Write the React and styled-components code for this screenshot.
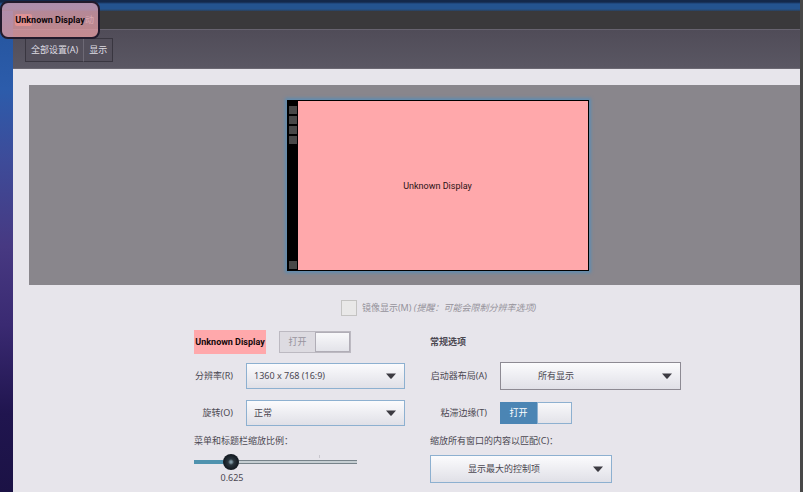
import React, { useState } from "react";
import styled, { createGlobalStyle } from "styled-components";

function App() {
  const [scale, setScale] = useState(0.625);
  const [sticky, setSticky] = useState(true);

  return (
    <Desktop>
      <GlobalStyle />
      <Window>
        <TitleBar>
          <CloseDot />
          <span>动</span>
        </TitleBar>
        <Toolbar>
          <Crumb type="button">全部设置(A)</Crumb>
          <Crumb type="button">显示</Crumb>
        </Toolbar>
        <Content>
          <Stage>
            <Monitor>
              <Launcher>
                <i />
                <i />
                <i />
                <i />
                <i className="trash" />
              </Launcher>
              <Screen>Unknown Display</Screen>
            </Monitor>
          </Stage>

          <Mirror>
            <input type="checkbox" disabled />
            <span>
              镜像显示(M) <em>(提醒：可能会限制分辨率选项)</em>
            </span>
          </Mirror>

          <Form>
            <Column>
              <Header>
                <DisplayName>Unknown Display</DisplayName>
                <Toggle $disabled>
                  <span>打开</span>
                  <input type="checkbox" defaultChecked disabled />
                </Toggle>
              </Header>
              <Row $label={39}>
                <label htmlFor="resolution">分辨率(R)</label>
                <Dropdown id="resolution" options={["1360 x 768 (16:9)"]} />
              </Row>
              <Row $label={39}>
                <label htmlFor="rotation">旋转(O)</label>
                <Dropdown id="rotation" options={["正常"]} />
              </Row>
              <Caption htmlFor="scale">菜单和标题栏缩放比例：</Caption>
              <Scale>
                <Slider
                  id="scale"
                  type="range"
                  min="0.5"
                  max="1.125"
                  step="0.125"
                  value={scale}
                  style={{ "--fill": `${((scale - 0.5) / 0.625) * 100}%` }}
                  onChange={(e) => setScale(Number(e.target.value))}
                />
                <output htmlFor="scale">{scale}</output>
              </Scale>
            </Column>

            <Column $wide>
              <Header>
                <h2>常规选项</h2>
              </Header>
              <Row $label={57}>
                <label htmlFor="launcher">启动器布局(A)</label>
                <Dropdown id="launcher" options={["所有显示"]} tall plain />
              </Row>
              <Row $label={57}>
                <label htmlFor="sticky">粘滞边缘(T)</label>
                <Toggle>
                  <span>打开</span>
                  <input
                    id="sticky"
                    type="checkbox"
                    checked={sticky}
                    onChange={() => setSticky((prev) => !prev)}
                  />
                </Toggle>
              </Row>
              <Caption htmlFor="match">缩放所有窗口的内容以匹配(C)：</Caption>
              <MatchField>
                <Dropdown id="match" options={["显示最大的控制项"]} tall />
              </MatchField>
            </Column>
          </Form>
        </Content>
      </Window>
      <Badge>Unknown Display</Badge>
    </Desktop>
  );
}

function Dropdown({ id, options, tall, plain }) {
  return (
    <SelectBox $tall={tall} $plain={plain}>
      <select id={id}>
        {options.map((item) => (
          <option key={item}>{item}</option>
        ))}
      </select>
      <svg width="10" height="6" viewBox="0 0 10 6">
        <path d="M0 0.5H10L5.6 5.4Q5 6 4.4 5.4Z" fill="#3c3b42" />
      </svg>
    </SelectBox>
  );
}

export default App;

const GlobalStyle = createGlobalStyle`
  * {
    box-sizing: border-box;
  }
  body {
    margin: 0;
    color: #4b4852;
    font: 9px/10px "Noto Sans", "Noto Sans CJK SC", sans-serif;
  }
  button, input, select {
    margin: 0;
    color: inherit;
    font: inherit;
  }
`;

const Desktop = styled.div`
  position: relative;
  display: flex;
  min-height: 100vh;
  padding: 11px 3px 0 13px;
  background:
    linear-gradient(#484848, #484848) right / 3px 100% no-repeat,
    linear-gradient(#14284a 2px, #24538f 4px, #24538f 9px, #2b4058) top / 100%
      11px no-repeat,
    linear-gradient(#23539a, #2c5cab 18%, #3d4c9a 32%, #473982 50%, #3a2a72 66%, #20154f 84%, #1b1245);
`;

const Window = styled.div`
  flex: 1;
  display: flex;
  flex-direction: column;
  min-width: 0;
  background: #e7e5eb;
`;

const TitleBar = styled.div`
  display: flex;
  align-items: center;
  gap: 53px;
  height: 18px;
  padding-left: 2px;
  color: #dfdbd2;
  background: #3a393b;
`;

const CloseDot = styled.i`
  width: 17px;
  height: 12px;
  border-radius: 2px;
  background: #ff6a3a;
`;

const Toolbar = styled.div`
  display: flex;
  align-items: flex-start;
  height: 40px;
  padding: 8px 12px;
  border-top: 1px solid #67636f;
  border-bottom: 1px solid #6b6872;
  background: linear-gradient(#504c58, #5a5763);
`;

const Crumb = styled.button`
  height: 24px;
  padding: 0 5px;
  border: 1px solid #393640;
  color: #dedce2;
  background: #534f5b;
  & + & {
    margin-left: -1px;
    border-left-color: #6d6975;
  }
`;

const Content = styled.main`
  flex: 1;
  padding: 16px 0 9px 16px;
`;

const Stage = styled.div`
  display: flex;
  justify-content: center;
  height: 200px;
  padding: 15px 0 0 46px;
  background: #89868c;
`;

const Monitor = styled.div`
  display: flex;
  width: 302px;
  height: 171px;
  border: 1px solid #000;
  box-shadow: 0 0 3px 2px #5f8cb0;
`;

const Launcher = styled.div`
  display: flex;
  flex-direction: column;
  gap: 2px;
  width: 10px;
  padding: 5px 1px 1px;
  background: #000;
  i {
    height: 8px;
    background: #484848;
  }
  .trash {
    margin-top: auto;
  }
`;

const Screen = styled.div`
  flex: 1;
  display: flex;
  align-items: center;
  justify-content: center;
  padding-right: 10px;
  color: #2c1216;
  font-family: Roboto, sans-serif;
  background: #ffa8ab;
`;

const Mirror = styled.label`
  display: flex;
  align-items: center;
  justify-content: center;
  gap: 5px;
  margin: 15px 0;
  padding-left: 48px;
  color: #96939b;
  input {
    appearance: none;
    width: 16px;
    height: 16px;
    border: 1px solid #c4c3c2;
    background: #e9e8e8;
  }
`;

const Form = styled.form`
  display: flex;
  justify-content: center;
  gap: 25px;
  padding-left: 46px;
`;

const Column = styled.div`
  display: flex;
  flex-direction: column;
  gap: 9px;
  width: ${(props) => (props.$wide ? "251px" : "211px")};
`;

const Header = styled.div`
  display: flex;
  align-items: center;
  gap: 13px;
  height: 22px;
  h2 {
    margin: 0;
    font-size: 9px;
  }
`;

const DisplayName = styled.strong`
  flex: none;
  width: 72px;
  color: #14080a;
  font-family: Roboto, sans-serif;
  line-height: 24px;
  text-align: center;
  background: #ffa8ab;
`;

const Row = styled.div`
  display: grid;
  grid-template-columns: ${(props) => props.$label}px 1fr;
  align-items: center;
  gap: 13px;
  height: 28px;
  label:first-child {
    justify-self: end;
    white-space: nowrap;
  }
`;

const Caption = styled.label`
  white-space: nowrap;
`;

const SelectBox = styled.div`
  display: grid;
  align-items: center;
  height: ${(props) => (props.$tall ? "28px" : "26px")};
  border: 1px solid ${(props) => (props.$plain ? "#8d8a93" : "#8db0d0")};
  background: linear-gradient(#fbfbfd, #e0e0e7);
  select {
    grid-area: 1 / 1;
    appearance: none;
    width: 100%;
    height: 100%;
    padding: 0 20px 0 ${(props) => (props.$tall ? "37px" : "7px")};
    border: 0;
    background: none;
  }
  svg {
    grid-area: 1 / 1;
    justify-self: end;
    margin-right: 8px;
    pointer-events: none;
  }
`;

const MatchField = styled.div`
  width: 182px;
`;

const Toggle = styled.label`
  display: flex;
  width: 72px;
  height: 22px;
  border: ${(props) => (props.$disabled ? "1px solid #bcb9c1" : "0")};
  color: ${(props) => (props.$disabled ? "#98949e" : "#fff")};
  background: ${(props) => (props.$disabled ? "#dddbe1" : "#4b85b4")};
  span {
    flex: 1;
    align-self: center;
    text-align: center;
  }
  input {
    appearance: none;
    width: 35px;
    border: 1px solid ${(props) => (props.$disabled ? "#b0adb6" : "#8db0d0")};
    background: linear-gradient(#f8f8fa, #e3e3e9);
  }
`;

const Scale = styled.div`
  display: flex;
  flex-direction: column;
  gap: 4px;
  width: 163px;
  output {
    width: 76px;
    text-align: center;
  }
`;

const Slider = styled.input`
  appearance: none;
  width: 100%;
  height: 14px;
  background:
    linear-gradient(#c9c7ce, #c9c7ce) 125px 0 / 1px 3px no-repeat,
    linear-gradient(#4f92ae, #4f92ae) left / var(--fill) 4px no-repeat,
    linear-gradient(#77838a 1px, #c6ced2 1px, #c6ced2 3px, #77838a 3px) center /
      100% 4px no-repeat;
  &::-webkit-slider-thumb {
    appearance: none;
    width: 16px;
    height: 16px;
    border-radius: 50%;
    background: radial-gradient(#7f98a4 1px, #2a353d 3px, #161d24 7px);
  }
`;

const Badge = styled.div`
  position: absolute;
  top: 1px;
  left: 0;
  width: 100px;
  height: 38px;
  border: 2px solid #211a2c;
  border-radius: 8px;
  color: #0c0508;
  font-family: Roboto, sans-serif;
  font-weight: bold;
  line-height: 34px;
  text-align: center;
  background: linear-gradient(#cf9db4cc, #e29a9ecc);
`;
